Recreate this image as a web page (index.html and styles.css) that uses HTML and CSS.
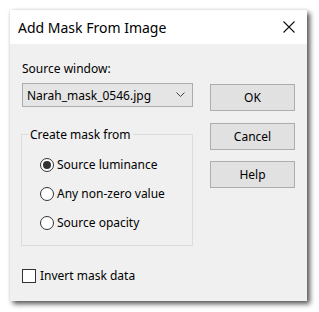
FILE: index.html
```html
<!DOCTYPE html>
<html lang="en">
<head>
  <meta charset="UTF-8" />
  <title>Add Mask From Image</title>
  <link rel="stylesheet" href="styles.css">
</head>
<body>
  <div class="window">
    <div class="titlebar">
      <span class="title">Add Mask From Image</span>
      <svg class="close" width="12" height="12" viewBox="0 0 12 12">
        <path d="M0.5 0.5 L11.5 11.5 M11.5 0.5 L0.5 11.5" stroke="#111" stroke-width="1.1" fill="none"/>
      </svg>
    </div>
    <div class="content">
      <div class="left">
        <div class="label">Source window:</div>
        <div class="combo">
          <span>Narah_mask_0546.jpg</span>
          <svg class="chev" width="9" height="5" viewBox="0 0 9 5">
            <path d="M0.5 0.5 L4.5 4.5 L8.5 0.5" stroke="#444" stroke-width="1" fill="none"/>
          </svg>
        </div>
        <fieldset class="group">
          <legend>Create mask from</legend>
          <div class="radio checked"><span class="dot"></span>Source luminance</div>
          <div class="radio"><span class="dot"></span>Any non-zero value</div>
          <div class="radio last"><span class="dot"></span>Source opacity</div>
        </fieldset>
        <div class="check"><span class="box"></span>Invert mask data</div>
      </div>
      <div class="buttons">
        <div class="btn">OK</div>
        <div class="btn">Cancel</div>
        <div class="btn">Help</div>
      </div>
    </div>
  </div>
</body>
</html>
```

FILE: styles.css
```css
body {
  margin: 0;
  background: #fff;
  font-family: 'Segoe UI', 'Noto Sans', sans-serif;
  font-size: 12px;
  color: #000;
}

.window {
  margin: 10px;
  width: 297px;
  height: 291px;
  background: #f0f0f0;
  box-shadow: 3px 3px 5px rgba(0,0,0,0.65), 0 0 3px rgba(0,0,0,0.12);
  display: flex;
  flex-direction: column;
}

.titlebar {
  height: 34px;
  background: #fff;
  display: flex;
  align-items: center;
  justify-content: space-between;
  padding: 0 12px 0 8px;
}

.title {
  font-size: 14px;
  color: #000;
}

.content {
  display: flex;
  padding: 16px 11px 0 12px;
}

.left {
  width: 171px;
}

.label {
  height: 23px;
  line-height: 18px;
}

.combo {
  height: 22px;
  border: 1px solid #adadad;
  background: #e5e5e5;
  display: flex;
  align-items: center;
  justify-content: space-between;
  padding: 0 7px 0 4px;
}

.chev {
  margin-top: -2px;
}

.group {
  margin: 19px 0 0 -1px;
  padding: 13px 0 0 0;
  width: 170px;
  height: 105px;
  border: 1px solid #dcdcdc;
}

.group legend {
  padding: 0 2px;
  margin-left: 6px;
}

.radio {
  display: flex;
  align-items: center;
  height: 17px;
  margin: 0 0 12px 18px;
}

.radio.last {
  margin-top: 10px;
  margin-bottom: 0;
}

.dot {
  width: 12px;
  height: 12px;
  border: 1px solid #333;
  border-radius: 50%;
  background: #fff;
  margin-right: 3px;
  display: flex;
  align-items: center;
  justify-content: center;
}

.checked .dot::after {
  content: '';
  width: 8px;
  height: 8px;
  border-radius: 50%;
  background: #333;
}

.check {
  display: flex;
  align-items: center;
  margin-top: 21px;
}

.box {
  width: 12px;
  height: 12px;
  border: 1px solid #333;
  background: #fff;
  margin-right: 4px;
}

.buttons {
  margin: 24px 0 0 17px;
  display: flex;
  flex-direction: column;
  gap: 11.5px;
}

.btn {
  width: 83px;
  height: 25px;
  border: 1px solid #adadad;
  background: #e1e1e1;
  display: flex;
  align-items: center;
  justify-content: center;
}
```
